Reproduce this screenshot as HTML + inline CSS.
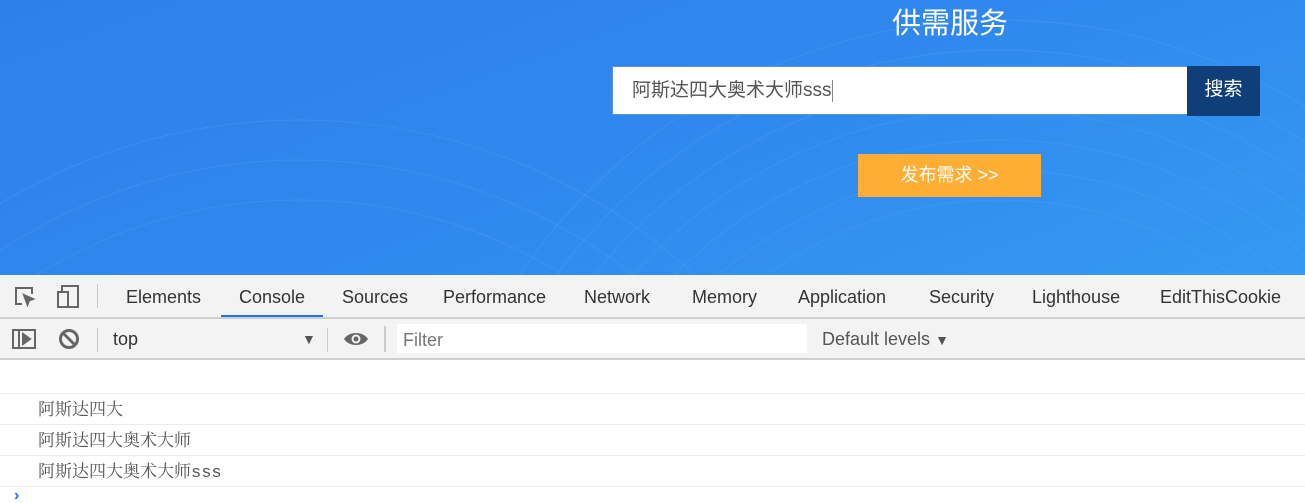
<!DOCTYPE html>
<html style="overflow:hidden"><head><meta charset="utf-8"><style>
*{margin:0;padding:0;box-sizing:border-box}
html,body{width:1305px;height:503px;overflow:hidden}
body{position:relative;background:#fff;font-family:"Liberation Sans","Noto Sans CJK SC",sans-serif}
.a{position:absolute}
#hero{left:0;top:0;width:1305px;height:275px;background:linear-gradient(160deg,#2d80ea 0%,#3088ee 50%,#3499f2 100%);overflow:hidden}
.tab{position:absolute;top:287px;font-size:18px;color:#333;white-space:nowrap;line-height:21px}
.row{position:absolute;left:0;width:1305px;height:1px;background:#ececec}
.log{position:absolute;left:38px;font-family:"Noto Serif CJK SC","Liberation Serif",serif;font-size:17px;color:#555;line-height:24px}
</style></head><body>
<div id="hero" class="a">
<svg class="a" style="left:0;top:0" width="1305" height="275"><g fill="none" stroke="#5fb0f5" stroke-opacity=".25" stroke-width="1">
<circle cx="1000" cy="600" r="400"/><circle cx="1000" cy="600" r="430"/><circle cx="1000" cy="600" r="460"/><circle cx="1000" cy="600" r="490"/><circle cx="1000" cy="600" r="520"/><circle cx="1000" cy="600" r="550"/><circle cx="1000" cy="600" r="580"/><circle cx="300" cy="700" r="500"/><circle cx="300" cy="700" r="540"/><circle cx="300" cy="700" r="580"/></g></svg>
<div class="a" style="left:850px;top:4px;width:200px;text-align:center;color:#fff;font-size:29px;line-height:40px">供需服务</div>
<div class="a" style="left:612px;top:66px;width:576px;height:49px;background:#fff;border:1px solid #5b8fe0"></div>
<div class="a" style="left:632px;top:78px;font-size:19px;color:#555;line-height:26px">阿斯达四大奥术大师sss<span style="display:inline-block;width:1px;height:22px;background:#888;vertical-align:middle"></span></div>
<div class="a" style="left:1187px;top:66px;width:73px;height:50px;background:#0f3e78;color:#fff;font-size:19px;text-align:center;line-height:48px">搜索</div>
<div class="a" style="left:858px;top:154px;width:183px;height:43px;background:#ffae35;color:#fff;font-size:18px;text-align:center;line-height:43px">发布需求 &gt;&gt;</div>
</div>
<div class="a" style="left:0;top:275px;width:1305px;height:84px;background:#f3f3f3"></div>
<div class="row" style="top:317px;background:#cfcfcf;height:2px"></div>
<div class="row" style="top:358px;background:#cfcfcf;height:2px"></div>
<svg class="a" style="left:12px;top:284px" width="70" height="26"><g fill="none" stroke="#666" stroke-width="2"><path d="M10 20H4V4h16v6"/><path d="M12 11l9 4-4 1.5-1.5 4z" fill="#666"/><rect x="46" y="8" width="10" height="15"/><path d="M50 8V2h16v21H56"/></g></svg>
<div class="a" style="left:97px;top:284px;width:1px;height:24px;background:#ccc"></div>
<div class="tab" style="left:126px">Elements</div>
<div class="tab" style="left:239px">Console</div>
<div class="a" style="left:221px;top:315px;width:102px;height:2px;background:#1a73e8"></div>
<div class="tab" style="left:342px">Sources</div>
<div class="tab" style="left:443px">Performance</div>
<div class="tab" style="left:584px">Network</div>
<div class="tab" style="left:692px">Memory</div>
<div class="tab" style="left:798px">Application</div>
<div class="tab" style="left:929px">Security</div>
<div class="tab" style="left:1032px">Lighthouse</div>
<div class="tab" style="left:1160px">EditThisCookie</div>
<svg class="a" style="left:12px;top:328px" width="70" height="22"><g fill="none" stroke="#666" stroke-width="2"><rect x="1" y="2" width="22" height="18"/><path d="M7 2v18"/><path d="M11 6l7 5-7 5z" fill="#666"/><circle cx="57" cy="11" r="8.5" stroke-width="3"/><path d="M51 5l12 12" stroke-width="3"/></g></svg>
<div class="a" style="left:97px;top:328px;width:1px;height:24px;background:#ccc"></div>
<div class="tab" style="left:113px;top:329px">top</div>
<div class="a" style="left:302px;top:331px;font-size:14px;color:#555;line-height:16px">▼</div>
<div class="a" style="left:327px;top:328px;width:1px;height:24px;background:#ccc"></div>
<svg class="a" style="left:343px;top:330px" width="26" height="18"><path d="M1 9C6 1 20 1 25 9 20 17 6 17 1 9z" fill="#666"/><circle cx="13" cy="9" r="4.5" fill="#f3f3f3"/><circle cx="13" cy="9" r="2.5" fill="#666"/></svg>
<div class="a" style="left:384px;top:326px;width:2px;height:26px;background:#ccc"></div>
<div class="a" style="left:397px;top:324px;width:410px;height:29px;background:#fff"></div>
<div class="tab" style="left:403px;top:330px;color:#777">Filter</div>
<div class="tab" style="left:822px;top:329px;color:#555">Default levels <span style="font-size:14px">▼</span></div>
<div class="row" style="top:393px"></div>
<div class="row" style="top:424px"></div>
<div class="row" style="top:455px"></div>
<div class="row" style="top:486px"></div>
<div class="log" style="top:396px">阿斯达四大</div>
<div class="log" style="top:427px">阿斯达四大奥术大师</div>
<div class="log" style="top:458px">阿斯达四大奥术大师<span style="font-family:'Liberation Mono',monospace;font-size:17px">sss</span></div>
<div class="a" style="left:14px;top:489px;color:#1a73e8;font-size:16px;font-weight:bold;line-height:14px">›</div>
</body></html>
